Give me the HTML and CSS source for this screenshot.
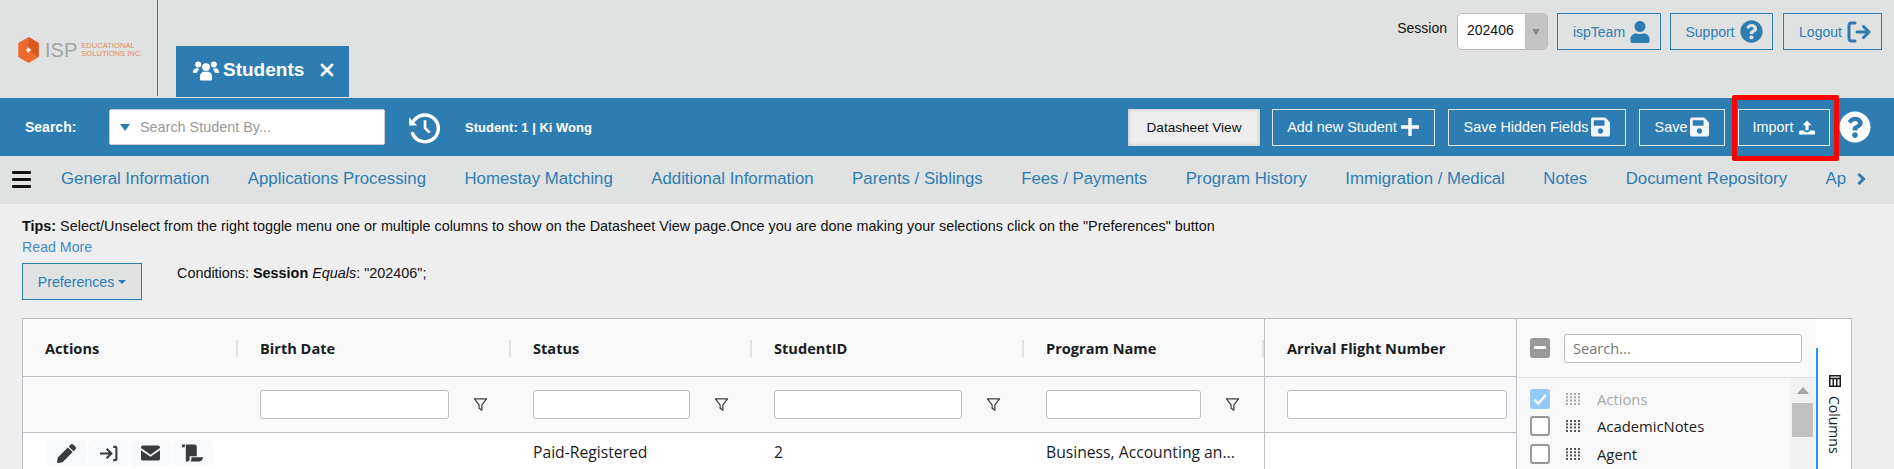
FILE: index.html

```html
<!DOCTYPE html>
<html lang="en">
<head>
    <meta charset="UTF-8">
    <meta name="viewport" content="width=device-width, initial-scale=1.0">
    <title>Students</title>
    <link rel="stylesheet" href="styles.css">
</head>
<body>
    <svg class="defs" width="0" height="0">
        <symbol id="i-save" viewBox="0 0 448 512"><path d="M433.941 129.941l-83.882-83.882A48 48 0 0 0 316.118 32H48C21.49 32 0 53.49 0 80v352c0 26.51 21.49 48 48 48h352c26.51 0 48-21.49 48-48V163.882a48 48 0 0 0-14.059-33.941zM224 416c-35.346 0-64-28.654-64-64 0-35.346 28.654-64 64-64s64 28.654 64 64c0 35.346-28.654 64-64 64zm96-304.52V212c0 6.627-5.373 12-12 12H76c-6.627 0-12-5.373-12-12V108c0-6.627 5.373-12 12-12h228.52c3.183 0 6.235 1.264 8.485 3.515l3.48 3.48A11.996 11.996 0 0 1 320 111.48z"/></symbol>
        <symbol id="i-question" viewBox="0 0 512 512"><path d="M504 256c0 136.997-111.043 248-248 248S8 392.997 8 256C8 119.083 119.043 8 256 8s248 111.083 248 248zM262.655 90c-54.497 0-89.255 22.957-116.549 63.758-3.536 5.286-2.353 12.415 2.715 16.258l34.699 26.31c5.205 3.947 12.621 3.008 16.665-2.122 17.864-22.658 30.113-35.797 57.303-35.797 20.429 0 45.698 13.148 45.698 32.958 0 14.976-12.363 22.667-32.534 33.976C247.128 238.528 216 254.941 216 296v4c0 6.627 5.373 12 12 12h56c6.627 0 12-5.373 12-12v-1.333c0-28.462 83.186-29.647 83.186-106.667 0-58.002-60.165-102-116.531-102zM256 338c-25.365 0-46 20.635-46 46 0 25.364 20.635 46 46 46s46-20.636 46-46c0-25.365-20.635-46-46-46z"/></symbol>
        <symbol id="i-funnel" viewBox="0 0 16 16"><path d="M1.500 2h13L9.500 8.500V14L6.500 12V8.500z" fill="none" stroke="currentColor" stroke-width="1.300" stroke-linejoin="round"/></symbol>
        <symbol id="i-grip" viewBox="0 0 14 12"><path d="M0 0h2v2H0zM4 0h2v2H4zM8 0h2v2H8zM12 0h2v2h-2zM0 3.300h2v2H0zM4 3.300h2v2H4zM8 3.300h2v2H8zM12 3.300h2v2h-2zM0 6.600h2v2H0zM4 6.600h2v2H4zM8 6.600h2v2H8zM12 6.600h2v2h-2zM0 10h2v2H0zM4 10h2v2H4zM8 10h2v2H8zM12 10h2v2h-2z"/></symbol>
    </svg>

    <header class="topbar">
        <div class="logo">
            <svg class="logo-mark" viewBox="0 0 24 28">
                <path d="M12 0l11 6.500v15L12 28 1 21.500v-15z" fill="#ea6a2c"/>
                <path d="M12 0l11 6.500v15L12 14z" fill="#d8581f"/>
                <path d="M12 11l3 3-3 3-3-3z" fill="#f6e3d6"/>
            </svg>
            <span class="logo-isp">ISP</span>
            <span class="logo-name">EDUCATIONAL<br>SOLUTIONS INC.</span>
        </div>
        <div class="tab">
            <svg class="tab-icon" viewBox="0 0 30 24" fill="#fff">
                <circle cx="6" cy="5" r="3.500"/><circle cx="24" cy="5" r="3.500"/><circle cx="15" cy="8" r="4.500"/>
                <path d="M0 14c0-3 2-4.500 4-4.500 1.500 0 2.500.5 3.300 1.300C5.500 12 4.500 13.500 4.300 15H1c-.6 0-1-.4-1-1zM30 14c0-3-2-4.500-4-4.500-1.500 0-2.500.5-3.300 1.300 1.800 1.200 2.800 2.700 3 4.200H29c.6 0 1-.4 1-1zM8 22v-3c0-3 2.500-5.500 4-5.500h6c1.500 0 4 2.500 4 5.500v3c0 1-.8 1.500-1.500 1.500h-11C8.800 23.500 8 23 8 22z"/>
            </svg>
            <span class="tab-title">Students</span>
            <svg class="tab-close" viewBox="0 0 14 14"><path d="M2 2l10 10M12 2L2 12" stroke="#fff" stroke-width="2.800" stroke-linecap="round"/></svg>
        </div>
        <div class="account">
            <span class="session-label">Session</span>
            <div class="session-select">
                <span class="session-value">202406</span>
                <span class="session-arrow"></span>
            </div>
            <a class="outline-btn team-btn">ispTeam
                <svg class="user-icon" viewBox="0 0 448 512" fill="#2e7db2"><path d="M224 256c70.700 0 128-57.300 128-128S294.700 0 224 0 96 57.300 96 128s57.300 128 128 128zm89.600 32h-16.700c-22.200 10.200-46.900 16-72.900 16s-50.600-5.800-72.900-16h-16.700C60.200 288 0 348.200 0 422.400V464c0 26.500 21.500 48 48 48h352c26.500 0 48-21.500 48-48v-41.600c0-74.200-60.200-134.400-134.400-134.400z"/></svg>
            </a>
            <a class="outline-btn support-btn">Support
                <svg class="support-icon" fill="#2e7db2"><use href="#i-question"/></svg>
            </a>
            <a class="outline-btn logout-btn">Logout
                <svg class="logout-icon" viewBox="0 0 24 24" fill="none" stroke="#2e7db2" stroke-width="3" stroke-linecap="round" stroke-linejoin="round"><path d="M8 3H4.500C3 3 2 4 2 5.500v13C2 20 3 21 4.500 21H8M10 12h12M16.500 6.500L22 12l-5.500 5.500"/></svg>
            </a>
        </div>
    </header>

    <div class="toolbar">
        <span class="search-label">Search:</span>
        <div class="search-box">
            <span class="search-caret"></span>
            <span class="search-hint">Search Student By...</span>
        </div>
        <svg class="history-icon" viewBox="0 0 32 32" fill="none" stroke="#fff" stroke-width="3.400">
            <path d="M6 9a13 13 0 1 1-1.500 13" stroke-linecap="round"/>
            <path d="M16.500 9v7.500l4.500 4.500" stroke-width="2.600"/>
            <path d="M1 6l0 8h8z" fill="#fff" stroke="none"/>
        </svg>
        <span class="student-info">Student: 1 | Ki Wong</span>
        <div class="toolbar-actions">
            <a class="view-btn">Datasheet View</a>
            <a class="bar-btn add-btn">Add new Student
                <svg class="btn-icon plus-icon" viewBox="0 0 20 20"><path d="M10 1v18M1 10h18" stroke="#fff" stroke-width="3.400"/></svg>
            </a>
            <a class="bar-btn hidden-btn">Save Hidden Fields
                <svg class="btn-icon" fill="#f2f5f9"><use href="#i-save"/></svg>
            </a>
            <a class="bar-btn save-btn">Save
                <svg class="btn-icon" fill="#f2f5f9"><use href="#i-save"/></svg>
            </a>
            <a class="bar-btn import-btn">Import
                <svg class="import-icon" viewBox="0 0 18 16" fill="#fff"><path d="M9 0l5 5.500h-3.200V11H7.200V5.500H4zM1 11.500h4.500c.3 1.200 1.800 2 3.500 2s3.200-.8 3.500-2H17c.6 0 1 .4 1 1V15c0 .6-.4 1-1 1H1c-.6 0-1-.4-1-1v-2.500c0-.6.400-1 1-1z"/></svg>
            </a>
            <svg class="help-icon" fill="#fff"><use href="#i-question"/></svg>
        </div>
        <div class="import-mark"></div>
    </div>

    <nav class="tabs-nav">
        <div class="burger"><span></span><span></span><span></span></div>
        <div class="nav-links">
            <a>General Information</a>
            <a>Applications Processing</a>
            <a>Homestay Matching</a>
            <a>Additional Information</a>
            <a>Parents / Siblings</a>
            <a>Fees / Payments</a>
            <a>Program History</a>
            <a>Immigration / Medical</a>
            <a>Notes</a>
            <a>Document Repository</a>
            <a>Ap</a>
        </div>
        <svg class="nav-next" viewBox="0 0 10 14"><path d="M2.500 2l5 5-5 5" fill="none" stroke="#2e7db2" stroke-width="3"/></svg>
    </nav>

    <main class="content">
        <p class="tips"><b>Tips:</b> Select/Unselect from the right toggle menu one or multiple columns to show on the Datasheet View page.Once you are done making your selections click on the "Preferences" button</p>
        <a class="read-more">Read More</a>
        <div class="prefs-row">
            <a class="prefs-btn">Preferences <span class="prefs-caret"></span></a>
            <span class="conditions">Conditions: <b>Session</b> <i>Equals</i>: "202406";</span>
        </div>

        <section class="grid">
            <div class="grid-main">
                <div class="grid-row header-row">
                    <div class="cell">Actions<span class="sep"></span></div>
                    <div class="cell">Birth Date<span class="sep"></span></div>
                    <div class="cell">Status<span class="sep"></span></div>
                    <div class="cell">StudentID<span class="sep"></span></div>
                    <div class="cell">Program Name<span class="sep"></span></div>
                    <div class="cell last-col">Arrival Flight Number</div>
                </div>
                <div class="grid-row filter-row">
                    <div class="cell"></div>
                    <div class="cell"><span class="filter-input w189"></span><svg class="funnel"><use href="#i-funnel"/></svg></div>
                    <div class="cell"><span class="filter-input w157"></span><svg class="funnel"><use href="#i-funnel"/></svg></div>
                    <div class="cell"><span class="filter-input w188"></span><svg class="funnel"><use href="#i-funnel"/></svg></div>
                    <div class="cell"><span class="filter-input w155"></span><svg class="funnel"><use href="#i-funnel"/></svg></div>
                    <div class="cell last-col"><span class="filter-input w220"></span></div>
                </div>
                <div class="grid-row data-row">
                    <div class="cell action-cell">
                        <span class="act"><svg viewBox="0 0 512 512" class="act-icon"><path d="M497.900 142.100l-46.100 46.100c-4.700 4.700-12.300 4.700-17 0l-111-111c-4.700-4.700-4.700-12.300 0-17l46.100-46.100c18.700-18.700 49.100-18.700 67.900 0l60.100 60.100c18.800 18.700 18.800 49.100 0 67.900zM284.200 99.800L21.600 362.400.4 483.900c-2.900 16.400 11.400 30.600 27.800 27.800l121.500-21.300 262.600-262.600c4.700-4.700 4.700-12.300 0-17l-111-111c-4.800-4.700-12.400-4.700-17.100 0z"/></svg></span>
                        <span class="act"><svg viewBox="0 0 20 18" class="act-icon"><path d="M1 9h11M8 4l5 5-5 5M15 2h2c.8 0 1.300.5 1.300 1.300v11.400c0 .8-.5 1.300-1.300 1.300h-2" fill="none" stroke="#383b40" stroke-width="2.200"/></svg></span>
                        <span class="act"><svg viewBox="0 0 20 16" class="mail-icon"><path d="M2 0h16c1 0 2 1 2 2v.8l-10 7-10-7V2C0 1 1 0 2 0zM0 5l10 7 10-7v9c0 1-1 2-2 2H2c-1 0-2-1-2-2z"/></svg></span>
                        <span class="act"><svg viewBox="0 0 22 18" class="scroll-icon"><path d="M0 0h3v3H0zM4 0h9c1.500 0 2.500 1 2.500 2.500v10H8v3c0 1.500-1.500 2.500-3 2.500-1 0-1-1-1-2zM10 13.500h12c0 2.500-2 4.500-4 4.500H8.500c1-.8 1.500-2 1.500-4.500z"/></svg></span>
                    </div>
                    <div class="cell"></div>
                    <div class="cell">Paid-Registered</div>
                    <div class="cell">2</div>
                    <div class="cell">Business, Accounting an...</div>
                    <div class="cell last-col"></div>
                </div>
            </div>

            <aside class="col-panel">
                <div class="panel-head">
                    <span class="check minus"></span>
                    <span class="panel-search">Search...</span>
                </div>
                <div class="panel-list">
                    <div class="panel-items">
                        <div class="panel-item faded">
                            <span class="check checked"><svg viewBox="0 0 14 14"><path d="M2 7.500l3.500 3.500L12 3.500" fill="none" stroke="#fff" stroke-width="2"/></svg></span>
                            <svg class="grip"><use href="#i-grip"/></svg>
                            Actions
                        </div>
                        <div class="panel-item"><span class="check"></span><svg class="grip"><use href="#i-grip"/></svg>AcademicNotes</div>
                        <div class="panel-item"><span class="check"></span><svg class="grip"><use href="#i-grip"/></svg>Agent</div>
                    </div>
                    <div class="scrollbar">
                        <span class="scroll-up"></span>
                        <span class="scroll-thumb"></span>
                    </div>
                </div>
            </aside>

            <div class="side-tab">
                <div class="side-btn">
                    <svg class="col-icon" viewBox="0 0 12 12"><path d="M.75.75h10.500v10.500H.75zM.75 3.500h10.500M4.250 3.500v7.750M7.750 3.500v7.750" fill="none" stroke="#181d1f" stroke-width="1.500"/></svg>
                    <span class="side-label">Columns</span>
                </div>
            </div>
        </section>
    </main>
</body>
</html>
```

FILE: styles.css

```css
* {
    box-sizing: border-box;
}
html, body {
    height: 469px;
    overflow: hidden;
}
body {
    margin: 0;
    background-color: #eeeeee;
    font-family: "Liberation Sans", Arial, sans-serif;
    color: #111;
}
.defs {
    position: absolute;
}
a {
    text-decoration: none;
}

/* top header */
.topbar {
    display: flex;
    height: 98px;
    background-color: #e0e2e2;
}
.logo {
    width: 158px;
    height: 96px;
    flex: none;
    border-right: 1px solid #2e7db2;
    display: flex;
    align-items: center;
    padding: 4px 0 0 17px;
}
.logo-mark {
    width: 23px;
    height: 26px;
    flex: none;
}
.logo-isp {
    font-size: 20px;
    color: #a3a5a6;
    margin-left: 5px;
}
.logo-name {
    font-size: 7.600px;
    line-height: 8.500px;
    color: #e98a5c;
    margin-left: 4px;
    white-space: nowrap;
}
.tab {
    width: 173px;
    height: 51px;
    margin: 46px 0 0 18px;
    background-color: #2e7db2;
    color: #fff;
    display: flex;
    align-items: center;
    padding: 0 15px 3px 17px;
}
.tab-icon {
    width: 26px;
    height: 21px;
    flex: none;
}
.tab-title {
    font-size: 19px;
    font-weight: bold;
    margin-left: 4px;
}
.tab-close {
    width: 14px;
    height: 14px;
    margin-left: auto;
}
.account {
    margin-left: auto;
    display: flex;
    align-items: flex-start;
    padding: 13px 12px 0 0;
}
.session-label {
    font-size: 14px;
    margin: 7px 10px 0 0;
}
.session-select {
    width: 91px;
    height: 37px;
    display: flex;
    background-color: #fff;
    border: 1px solid #bbb;
    border-radius: 5px;
    overflow: hidden;
    margin-right: 9px;
}
.session-value {
    flex: 1;
    font-size: 14px;
    line-height: 33px;
    padding-left: 9px;
}
.session-arrow {
    width: 22px;
    background-color: #c4c4c4;
    position: relative;
}
.session-arrow::after {
    content: "";
    position: absolute;
    left: 7px;
    top: 15px;
    border: 4px solid transparent;
    border-top: 6px solid #888;
}
.outline-btn {
    height: 37px;
    display: flex;
    align-items: center;
    justify-content: center;
    gap: 5px;
    padding-left: 5px;
    border: 1px solid #2e7db2;
    color: #2e7db2;
    font-size: 14px;
}
.team-btn {
    width: 104px;
}
.support-btn {
    width: 103px;
    margin-left: 9px;
}
.logout-btn {
    width: 99px;
    margin-left: 10px;
}
.user-icon {
    width: 20px;
    height: 22px;
}
.support-icon {
    width: 23px;
    height: 23px;
}
.logout-icon {
    width: 24px;
    height: 24px;
}

/* blue search bar */
.toolbar {
    height: 58px;
    background-color: #2e7db2;
    display: flex;
    align-items: center;
    padding-left: 25px;
    color: #fff;
    position: relative;
}
.search-label {
    width: 84px;
    font-size: 14px;
    font-weight: bold;
}
.search-box {
    width: 276px;
    height: 36px;
    background-color: #fff;
    border: 1px solid #ccc;
    border-radius: 2px;
    display: flex;
    align-items: center;
    padding-left: 10px;
}
.search-caret {
    border: 5px solid transparent;
    border-top: 7px solid #2e7db2;
    border-bottom: 0;
    margin-right: 10px;
}
.search-hint {
    color: #9a9a9a;
    font-size: 14.400px;
}
.history-icon {
    width: 33px;
    height: 33px;
    margin-left: 23px;
}
.student-info {
    font-size: 13px;
    font-weight: bold;
    margin-left: 24px;
}
.toolbar-actions {
    margin-left: auto;
    display: flex;
    align-items: center;
    padding-right: 23px;
}
.view-btn {
    width: 132px;
    height: 37px;
    background-color: #eeeeee;
    box-shadow: inset 0 0 4px #bbb;
    color: #111;
    font-size: 13.600px;
    display: flex;
    align-items: center;
    justify-content: center;
    margin-right: 12px;
}
.bar-btn {
    height: 37px;
    border: 1px solid #dfe9f1;
    color: #fff;
    font-size: 14.400px;
    display: flex;
    align-items: center;
    justify-content: center;
    gap: 3px;
}
.add-btn {
    width: 163px;
    margin-right: 13px;
}
.hidden-btn {
    width: 178px;
    margin-right: 13px;
}
.save-btn {
    width: 86px;
    margin-right: 13px;
}
.import-btn {
    width: 92px;
    gap: 6px;
    margin-right: 9px;
}
.btn-icon {
    width: 19px;
    height: 24px;
}
.plus-icon {
    width: 20px;
    height: 20px;
}
.import-icon {
    width: 16px;
    height: 15px;
}
.help-icon {
    width: 32px;
    height: 32px;
}
.import-mark {
    position: absolute;
    left: 1732px;
    top: -3px;
    width: 107px;
    height: 66px;
    border: 5px solid #ff0000;
    border-radius: 2px;
}

/* section tabs */
.tabs-nav {
    height: 48px;
    background-color: #e0e2e2;
    display: flex;
    align-items: center;
    padding: 0 0 2px 12px;
}
.burger {
    width: 19px;
    flex: none;
    display: flex;
    flex-direction: column;
    gap: 4px;
}
.burger span {
    height: 3px;
    background-color: #111;
    border-radius: 1px;
}
.nav-links {
    display: flex;
    gap: 38.500px;
    margin-left: 30px;
    width: 1784px;
    white-space: nowrap;
}
.nav-links a {
    color: #2e7db2;
    font-size: 16.800px;
}
.nav-next {
    width: 10px;
    height: 14px;
    margin-left: 11px;
    flex: none;
}

/* page body */
.content {
    padding: 0 42px 0 22px;
}
.tips {
    margin: 0;
    padding-top: 14px;
    font-size: 14.400px;
    line-height: 16px;
}
.read-more {
    display: block;
    color: #428bca;
    font-size: 14.200px;
    line-height: 16px;
    margin-top: 5px;
}
.prefs-row {
    display: flex;
    align-items: flex-start;
    margin-top: 8px;
}
.prefs-btn {
    width: 120px;
    height: 37px;
    background-color: #e0e2e2;
    border: 1px solid #2e7db2;
    color: #2e7db2;
    font-size: 14.200px;
    display: flex;
    align-items: center;
    justify-content: center;
    gap: 4px;
}
.prefs-caret {
    border: 4px solid transparent;
    border-top: 4px solid #2e7db2;
    border-bottom: 0;
}
.conditions {
    font-size: 14.400px;
    margin: 2px 0 0 35px;
}

/* data grid */
.grid {
    display: flex;
    margin-top: 18px;
    height: 151px;
    background-color: #fff;
    border: 1px solid #babfc7;
    border-bottom: 0;
    font-family: "Open Sans", sans-serif;
    font-size: 14.600px;
    color: #181d1f;
}
.grid-main {
    width: 1493px;
    flex: none;
}
.grid-row {
    display: grid;
    grid-template-columns: 215px 273px 241px 272px 240px 252px;
}
.cell {
    display: flex;
    align-items: center;
    padding-left: 22px;
    white-space: nowrap;
}
.last-col {
    border-left: 1px solid #babfc7;
}
.header-row {
    height: 58px;
    background-color: #f8f8f8;
    border-bottom: 1px solid #babfc7;
    font-weight: bold;
}
.sep {
    width: 2px;
    height: 17px;
    background-color: #dde2eb;
    margin-left: auto;
    margin-top: 1px;
}
.filter-row {
    height: 56px;
    background-color: #f8f8f8;
    border-bottom: 1px solid #babfc7;
}
.filter-input {
    height: 29px;
    background-color: #fff;
    border: 1px solid #babfc7;
    border-radius: 3px;
    flex: none;
}
.w189 { width: 189px; }
.w157 { width: 157px; }
.w188 { width: 188px; }
.w155 { width: 155px; }
.w220 { width: 220px; }
.funnel {
    width: 15px;
    height: 15px;
    margin-left: 24px;
    color: #3d3c46;
}
.data-row {
    height: 37px;
    font-size: 15.700px;
}
.action-cell {
    align-items: flex-start;
    padding: 7px 0 0 23px;
    gap: 1px;
}
.act {
    width: 41px;
    height: 26px;
    background-color: #f8f9fa;
    border-radius: 5px;
    display: flex;
    align-items: center;
    justify-content: center;
}
.act-icon {
    width: 19px;
    height: 19px;
    fill: #383b40;
}
.mail-icon {
    width: 19px;
    height: 16px;
    fill: #383b40;
}
.scroll-icon {
    width: 21px;
    height: 18px;
    fill: #383b40;
}

/* columns panel */
.col-panel {
    width: 300px;
    flex: none;
    border-left: 1px solid #babfc7;
    background-color: #f8f8f8;
}
.panel-head {
    height: 59px;
    border-bottom: 1px solid #dde2eb;
    display: flex;
    align-items: center;
    padding-left: 13px;
}
.panel-search {
    width: 238px;
    height: 29px;
    margin-left: 14px;
    padding-left: 8px;
    background-color: #fff;
    border: 1px solid #babfc7;
    border-radius: 3px;
    color: #777;
    line-height: 27px;
}
.check {
    width: 20px;
    height: 20px;
    flex: none;
    background-color: #fff;
    border: 2px solid #999;
    border-radius: 3px;
}
.check.minus {
    background-color: #999;
    position: relative;
}
.check.minus::after {
    content: "";
    position: absolute;
    left: 2px;
    right: 2px;
    top: 6px;
    height: 3px;
    background-color: #fff;
}
.check.checked {
    background-color: #94c9f8;
    border-color: #94c9f8;
    display: flex;
}
.panel-list {
    display: flex;
}
.panel-items {
    flex: 1;
    padding: 7px 0 0 13px;
}
.panel-item {
    height: 27.500px;
    display: flex;
    align-items: center;
    font-size: 14.800px;
}
.panel-item.faded {
    color: #a6a8a9;
}
.grip {
    width: 14px;
    height: 12px;
    margin: 0 17px 0 16px;
    fill: #555;
}
.faded .grip {
    fill: #aaa;
}
.scrollbar {
    width: 26px;
    background-color: #f1f1f1;
    height: 92px;
    padding: 9px 0 0 2px;
}
.scroll-up {
    display: block;
    width: 0;
    margin-left: 5px;
    border: 6px solid transparent;
    border-top: 0;
    border-bottom: 7px solid #a3a3a3;
}
.scroll-thumb {
    display: block;
    width: 21px;
    height: 34px;
    margin-top: 9px;
    background-color: #c1c1c1;
}

/* side tab */
.side-tab {
    flex: 1;
    background-color: #fff;
}
.side-btn {
    margin-top: 29px;
    height: 122px;
    border-left: 2px solid #2196f3;
    display: flex;
    flex-direction: column;
    align-items: center;
    padding-top: 27px;
}
.col-icon {
    width: 12px;
    height: 12px;
    flex: none;
}
.side-label {
    writing-mode: vertical-rl;
    font-size: 14px;
    margin-top: 9px;
}
```
